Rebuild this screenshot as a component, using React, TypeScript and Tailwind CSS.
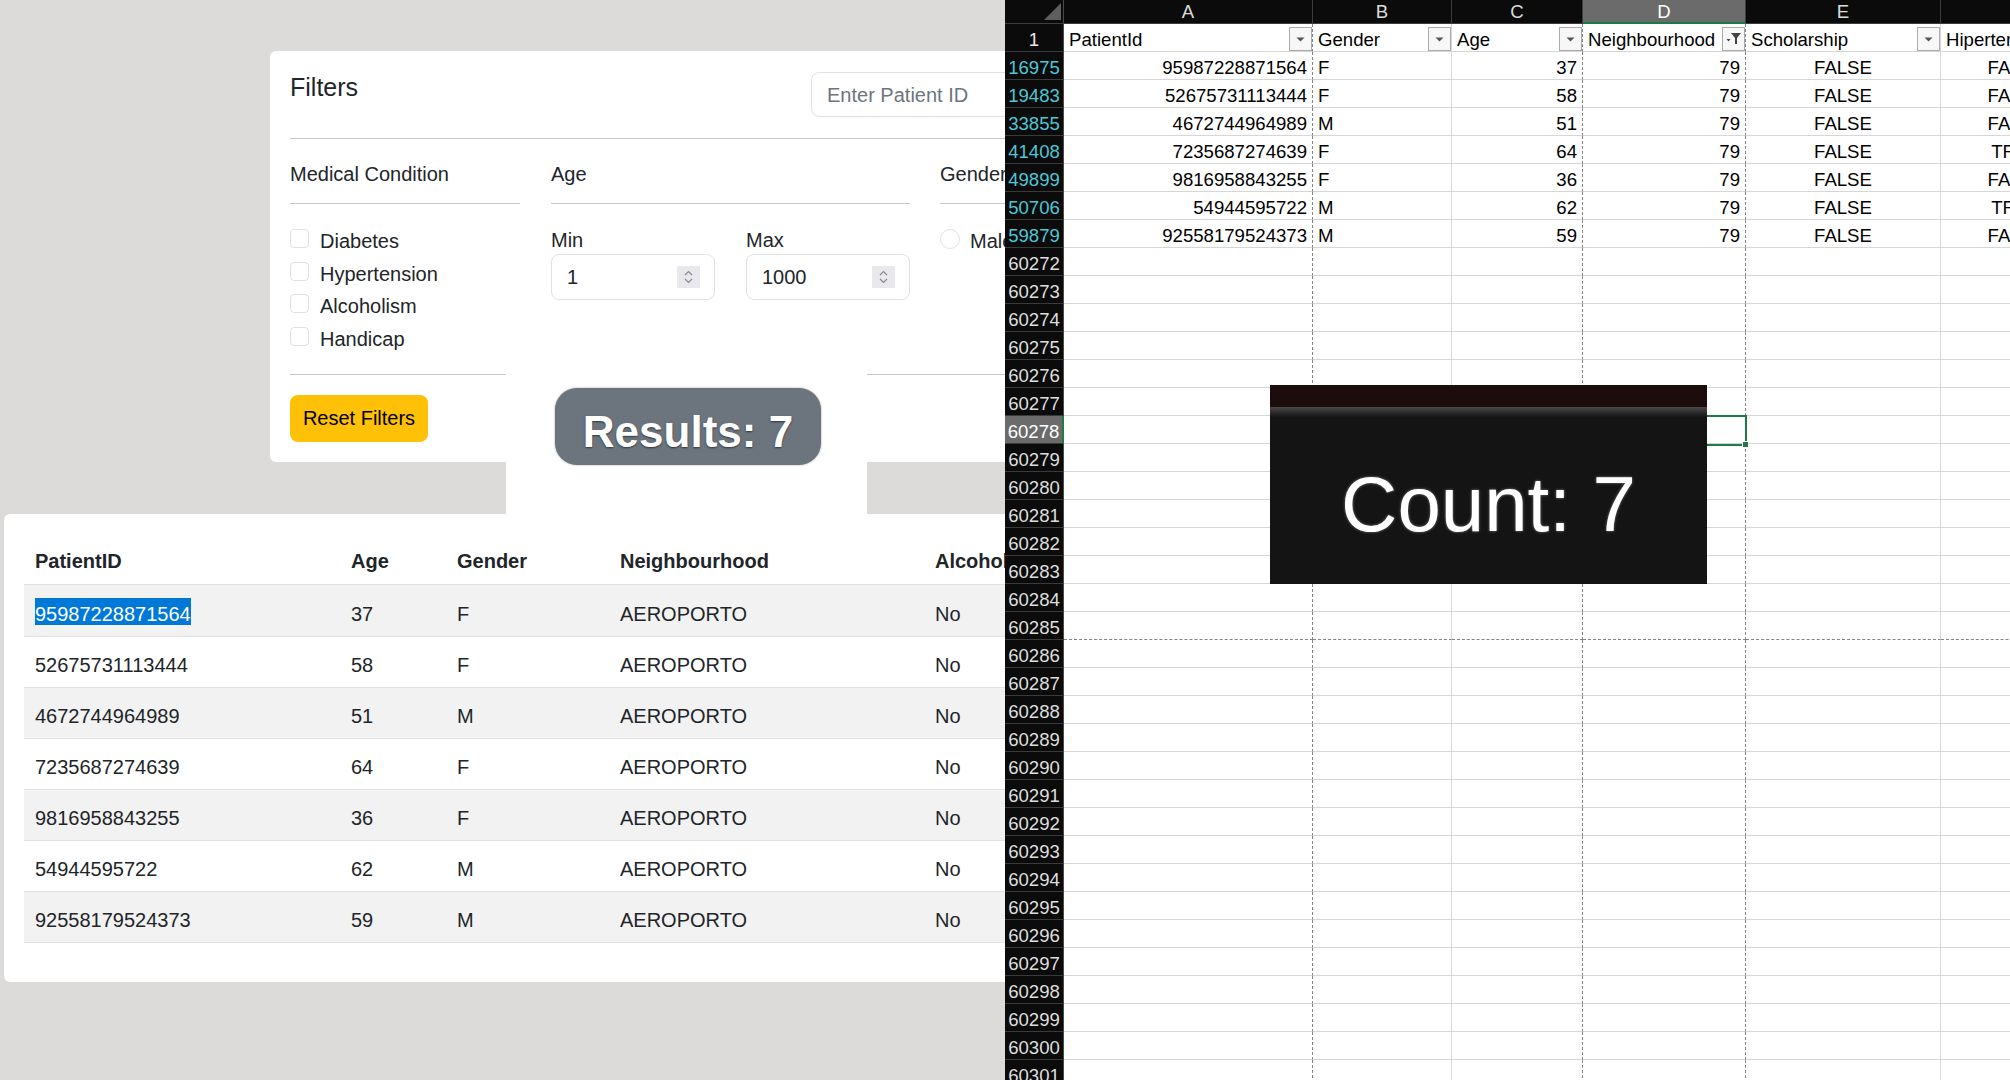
import React from "react";

const patients = [
  { id: "95987228871564", age: 37, gender: "F", hood: "AEROPORTO", alc: "No" },
  { id: "52675731113444", age: 58, gender: "F", hood: "AEROPORTO", alc: "No" },
  { id: "4672744964989", age: 51, gender: "M", hood: "AEROPORTO", alc: "No" },
  { id: "7235687274639", age: 64, gender: "F", hood: "AEROPORTO", alc: "No" },
  { id: "9816958843255", age: 36, gender: "F", hood: "AEROPORTO", alc: "No" },
  { id: "54944595722", age: 62, gender: "M", hood: "AEROPORTO", alc: "No" },
  { id: "92558179524373", age: 59, gender: "M", hood: "AEROPORTO", alc: "No" },
];

const sheetRows = [
  { n: "16975", cells: ["95987228871564", "F", "37", "79", "FALSE", "FALSE"] },
  { n: "19483", cells: ["52675731113444", "F", "58", "79", "FALSE", "FALSE"] },
  { n: "33855", cells: ["4672744964989", "M", "51", "79", "FALSE", "FALSE"] },
  { n: "41408", cells: ["7235687274639", "F", "64", "79", "FALSE", "TRUE"] },
  { n: "49899", cells: ["9816958843255", "F", "36", "79", "FALSE", "FALSE"] },
  { n: "50706", cells: ["54944595722", "M", "62", "79", "FALSE", "TRUE"] },
  { n: "59879", cells: ["92558179524373", "M", "59", "79", "FALSE", "FALSE"] },
];

const sheetCols = [
  { letter: "A", head: "PatientId", w: "w-[249px]", line: "[border-right:1px_dashed_#858585]", align: "text-right" },
  { letter: "B", head: "Gender", w: "w-[139px]", line: "border-r border-r-[#d6d6d6]", align: "text-left" },
  { letter: "C", head: "Age", w: "w-[131px]", line: "[border-right:1px_dashed_#858585]", align: "text-right" },
  { letter: "D", head: "Neighbourhood", w: "w-[163px]", line: "[border-right:1px_dashed_#858585]", align: "text-right" },
  { letter: "E", head: "Scholarship", w: "w-[195px]", line: "border-r border-r-[#d6d6d6]", align: "text-center" },
  { letter: "F", head: "Hipertension", w: "w-[152px]", line: "border-r border-r-[#d6d6d6]", align: "text-center" },
];

const emptyRows = Array.from({ length: 30 }, (_, i) => String(60272 + i));

const Spinner = () => (
  <svg width="23" height="22" viewBox="0 0 23 22" className="shrink-0">
    <rect width="23" height="22" fill="#e9e9ed" />
    <path d="M8 9 L11.5 5.5 L15 9" fill="none" stroke="#8a8a8a" strokeWidth="1.2" />
    <path d="M8 13 L11.5 16.5 L15 13" fill="none" stroke="#8a8a8a" strokeWidth="1.2" />
  </svg>
);

const DropButton = ({ filtered }: { filtered?: boolean }) => (
  <div className="w-[23px] h-[24px] shrink-0 self-end border border-[#ababab] bg-[#f7f7f7]">
    <svg width="21" height="22" viewBox="0 0 21 22">
      {filtered ? (
        <>
          <polygon points="3.5,11 7.5,11 5.5,13.5" fill="#444" />
          <polygon points="8,5 18,5 14,10 14,16 12,16 12,10" fill="#444" />
        </>
      ) : (
        <polygon points="6.5,9.5 14.5,9.5 10.5,13.5" fill="#555" />
      )}
    </svg>
  </div>
);

const Checkbox = ({ label }: { label: string }) => (
  <div className="flex items-start h-[32.67px]">
    <div className="w-[19px] h-[19px] mt-[3px] border border-[#dee2e6] rounded-[4px] bg-white" />
    <span className="ml-[11px] leading-[30px]">{label}</span>
  </div>
);

const NumberBox = ({ label, value }: { label: string; value: string }) => (
  <div className="flex flex-col w-[164px]">
    <span className="leading-[28px]">{label}</span>
    <div className="flex items-center h-[46px] border border-[#dee2e6] rounded-[8px] pl-[15px] pr-[14px]">
      <span className="flex-1">{value}</span>
      <Spinner />
    </div>
  </div>
);

const Filters = () => (
  <div className="shrink-0 ml-[270px] mt-[51px] w-[1000px] h-[411px] bg-white rounded-[6px] pl-[20px] pt-[21px] flex flex-col text-[20px] text-[#212529]">
    <div className="flex items-start">
      <span className="w-[521px] text-[25px] leading-[30px]">Filters</span>
      <div className="w-[320px] h-[45px] border border-[#dee2e6] rounded-[8px] pl-[15px] flex items-center text-[#6c757d]">
        Enter Patient ID
      </div>
    </div>
    <div className="mt-[21px] h-px bg-[#c6c7c8]" />
    <div className="flex mt-[20px]">
      <div className="w-[230px] flex flex-col">
        <span className="leading-[30px]">Medical Condition</span>
        <div className="mt-[14px] h-px bg-[#c6c7c8]" />
        <div className="mt-[22px] flex flex-col">
          <Checkbox label="Diabetes" />
          <Checkbox label="Hypertension" />
          <Checkbox label="Alcoholism" />
          <Checkbox label="Handicap" />
        </div>
      </div>
      <div className="ml-[31px] w-[359px] flex flex-col">
        <span className="leading-[30px]">Age</span>
        <div className="mt-[14px] h-px bg-[#c6c7c8]" />
        <div className="mt-[22px] flex gap-[31px]">
          <NumberBox label="Min" value="1" />
          <NumberBox label="Max" value="1000" />
        </div>
      </div>
      <div className="ml-[30px] w-[240px] flex flex-col">
        <span className="leading-[30px]">Gender</span>
        <div className="mt-[14px] h-px bg-[#c6c7c8]" />
        <div className="mt-[22px] flex items-start">
          <div className="w-[20px] h-[20px] mt-[3px] rounded-full border border-[#dee2e6]" />
          <span className="ml-[10px] leading-[30px]">Male</span>
          <div className="w-[20px] h-[20px] mt-[3px] ml-[24px] rounded-full border border-[#dee2e6]" />
          <span className="ml-[10px] leading-[30px]">Female</span>
        </div>
      </div>
    </div>
    <div className="mt-[17px] h-px bg-[#c6c7c8]" />
    <button className="mt-[20px] w-[138px] h-[47px] rounded-[8px] bg-[#ffc107] text-black flex items-center justify-center">
      Reset Filters
    </button>
  </div>
);

const ResultsTable = () => (
  <div className="shrink-0 ml-[4px] mt-[52px] w-[1200px] h-[468px] bg-white rounded-[6px] pl-[20px] pt-[20px] text-[20px] text-[#212529]">
    <table className="table-fixed border-collapse w-[1160px]">
      <colgroup>
        <col className="w-[316px]" />
        <col className="w-[106px]" />
        <col className="w-[163px]" />
        <col className="w-[315px]" />
        <col className="w-[260px]" />
      </colgroup>
      <thead>
        <tr className="border-b border-[#dee2e6]">
          {["PatientID", "Age", "Gender", "Neighbourhood", "Alcoholism"].map((h) => (
            <th key={h} className="text-left font-bold px-[11px] pt-[12px] pb-[8px] leading-[30px] whitespace-nowrap">
              {h}
            </th>
          ))}
        </tr>
      </thead>
      <tbody>
        {patients.map((p, i) => (
          <tr key={p.id} className={`border-b border-[#dee2e6] ${i % 2 === 0 ? "bg-[#f2f2f2]" : "bg-white"}`}>
            <td className="px-[11px] pt-[13px] pb-[7px] leading-[30px]">
              {i === 0 ? (
                <span className="inline-block bg-[#0078d7] text-white leading-[22px] pt-[5px]">{p.id}</span>
              ) : (
                p.id
              )}
            </td>
            <td className="px-[11px] pt-[13px] pb-[7px] leading-[30px]">{p.age}</td>
            <td className="px-[11px] pt-[13px] pb-[7px] leading-[30px]">{p.gender}</td>
            <td className="px-[11px] pt-[13px] pb-[7px] leading-[30px]">{p.hood}</td>
            <td className="px-[11px] pt-[13px] pb-[7px] leading-[30px]">{p.alc}</td>
          </tr>
        ))}
      </tbody>
    </table>
  </div>
);

const LeftPane = () => (
  <div className="relative w-[1005px] h-full shrink-0 overflow-hidden bg-[#dcdbd9] flex flex-col font-['Liberation_Sans',Arial,sans-serif]">
    <Filters />
    <ResultsTable />
    {/* pasted result badge */}
    <div className="absolute left-[506px] top-[370px] w-[361px] h-[150px] bg-white pt-[18px] pl-[49px]">
      <div className="w-[266px] h-[77px] rounded-[22px] bg-[#6c757d] shadow-[0_0_2px_rgba(0,0,0,0.45)] flex justify-center pt-[22px]">
        <span className="text-[44px] leading-[44px] font-bold text-white [text-shadow:0_1px_2px_rgba(0,0,0,0.55)]">
          Results: 7
        </span>
      </div>
    </div>
  </div>
);

const RowHead = ({ n, tone, selected }: { n: string; tone: string; selected?: boolean }) => (
  <div
    className={`w-[59px] h-full shrink-0 text-center border-b border-b-[#3a3a3a] ${
      selected ? "bg-[#6b6b6b] text-white [border-right:2px_solid_#1e7b45]" : `bg-[#0b0b0b] ${tone} border-r border-r-[#4a4a4a]`
    }`}
  >
    {n}
  </div>
);

const Sheet = () => (
  <div className="relative flex-1 h-full overflow-hidden bg-white flex flex-col text-[18.6px] font-['Liberation_Sans',Arial,sans-serif]">
    {/* column letters */}
    <div className="flex h-[24px] shrink-0 leading-[24px] text-[#dcdcdc]">
      <div className="w-[59px] h-full shrink-0 bg-[#0b0b0b] border-r border-r-[#4a4a4a] border-b border-b-[#3d3d3d]">
        <svg width="58" height="23" viewBox="0 0 58 23">
          <polygon points="56,3 56,20 39,20" fill="#5e5e5e" />
        </svg>
      </div>
      {sheetCols.map((c) => (
        <div
          key={c.letter}
          className={`${c.w} h-full shrink-0 text-center border-r border-r-[#3d3d3d] ${
            c.letter === "D" ? "bg-[#6b6b6b] text-white [border-bottom:2px_solid_#1e7b45]" : "bg-[#0b0b0b] border-b border-b-[#3d3d3d]"
          }`}
        >
          {c.letter}
        </div>
      ))}
    </div>
    {/* header row with filters */}
    <div className="flex h-[28px] shrink-0 leading-[31px] text-black">
      <RowHead n="1" tone="text-[#e8e8e8]" />
      {sheetCols.map((c) => (
        <div key={c.letter} className={`${c.w} ${c.line} h-full shrink-0 flex pl-[5px] border-b border-b-[#d6d6d6] overflow-hidden`}>
          <span className="flex-1 whitespace-nowrap overflow-hidden">{c.head}</span>
          {c.letter !== "F" && <DropButton filtered={c.letter === "D"} />}
        </div>
      ))}
    </div>
    {/* filtered rows */}
    {sheetRows.map((r) => (
      <div key={r.n} className="flex h-[28px] shrink-0 leading-[31px] text-black">
        <RowHead n={r.n} tone="text-[#4ec6d6]" />
        {sheetCols.map((c, i) => (
          <div
            key={c.letter}
            className={`${c.w} ${c.line} ${c.align} h-full shrink-0 px-[5px] border-b border-b-[#d6d6d6] whitespace-nowrap overflow-hidden`}
          >
            {r.cells[i]}
          </div>
        ))}
      </div>
    ))}
    {emptyRows.map((n) => (
      <div key={n} className="flex h-[28px] shrink-0 leading-[31px]">
        <RowHead n={n} tone="text-[#dedede]" selected={n === "60278"} />
        {sheetCols.map((c) => (
          <div
            key={c.letter}
            className={`${c.w} ${c.line} h-full shrink-0 ${
              n === "60285" ? "[border-bottom:1px_dashed_#858585]" : "border-b border-b-[#d6d6d6]"
            }`}
          />
        ))}
      </div>
    ))}

    {/* active cell */}
    <div className="absolute left-[577px] top-[415px] w-[165px] h-[31px] border-2 border-[#1e7b45]">
      <div className="absolute -right-[4px] -bottom-[4px] w-[7px] h-[7px] bg-[#1e7b45] border border-white" />
    </div>

    {/* pasted count picture */}
    <div className="absolute left-[265px] top-[385px] w-[437px] h-[199px] flex flex-col bg-[#141414]">
      <div className="h-[22px] bg-[#1c0c0c]" />
      <div className="h-[10px] bg-gradient-to-b from-[#4a4a4a] to-[#161616]" />
      <div className="flex-1 flex justify-center pt-[48px]">
        <span className="text-[78px] leading-[78px] text-white [text-shadow:0_0_3px_rgba(255,255,255,0.45)]">
          Count: 7
        </span>
      </div>
    </div>
  </div>
);

export default function App() {
  return (
    <div className="w-[2010px] h-[1080px] flex overflow-hidden">
      <LeftPane />
      <Sheet />
    </div>
  );
}
